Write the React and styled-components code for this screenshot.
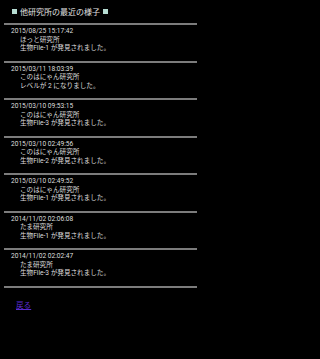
import React from "react";
import styled, { createGlobalStyle } from "styled-components";

const Global = createGlobalStyle`
  html, body { margin: 0; padding: 0; background: #000; }
  #root { min-height: 100vh; background: #000; }
`;

const Page = styled.div`
  width: 202px;
  background: #000;
  min-height: 100vh;
  font-family: Roboto, "Noto Sans CJK JP", sans-serif;
  color: #dedede;
`;

const Title = styled.div`
  display: flex;
  align-items: center;
  gap: 3px;
  height: 23px;
  padding-left: 12px;
  font-size: 8px;
  color: #e2e2e2;
`;

const Square = styled.span`
  display: inline-block;
  width: 5px;
  height: 5px;
  background: #b6dcd2;
`;

const Divider = styled.div`
  height: 2px;
  margin: 0 5px 0 4px;
  background: #7c7c7c;
`;

const Entry = styled.div`
  padding: 2px 0 8px 11px;
  font-size: 6.6px;
  line-height: 8.5px;
`;

const DateLine = styled.div`
  white-space: nowrap;
`;

const SubLine = styled.div`
  padding-left: 9px;
  white-space: nowrap;
`;

const Back = styled.a`
  display: inline-block;
  margin: 11px 0 0 16px;
  font-size: 7.6px;
  color: #5a2bd0;
  text-decoration: underline;
`;

const entries = [
  ["2015/08/25 15:17:42", "ほっと研究所", "生物File-1 が発見されました。"],
  ["2015/03/11 18:03:39", "このはにゃん研究所", "レベルが 2 になりました。"],
  ["2015/03/10 09:53:15", "このはにゃん研究所", "生物File-3 が発見されました。"],
  ["2015/03/10 02:49:56", "このはにゃん研究所", "生物File-2 が発見されました。"],
  ["2015/03/10 02:49:52", "このはにゃん研究所", "生物File-1 が発見されました。"],
  ["2014/11/02 02:06:08", "たま研究所", "生物File-1 が発見されました。"],
  ["2014/11/02 02:02:47", "たま研究所", "生物File-3 が発見されました。"],
];

export default function App() {
  return (
    <Page>
      <Global />
      <Title>
        <Square />
        <span>他研究所の最近の様子</span>
        <Square />
      </Title>
      <Divider />
      {entries.map(([d, a, b], i) => (
        <React.Fragment key={i}>
          <Entry>
            <DateLine>{d}</DateLine>
            <SubLine>{a}</SubLine>
            <SubLine>{b}</SubLine>
          </Entry>
          <Divider />
        </React.Fragment>
      ))}
      <Back href="#">戻る</Back>
    </Page>
  );
}
